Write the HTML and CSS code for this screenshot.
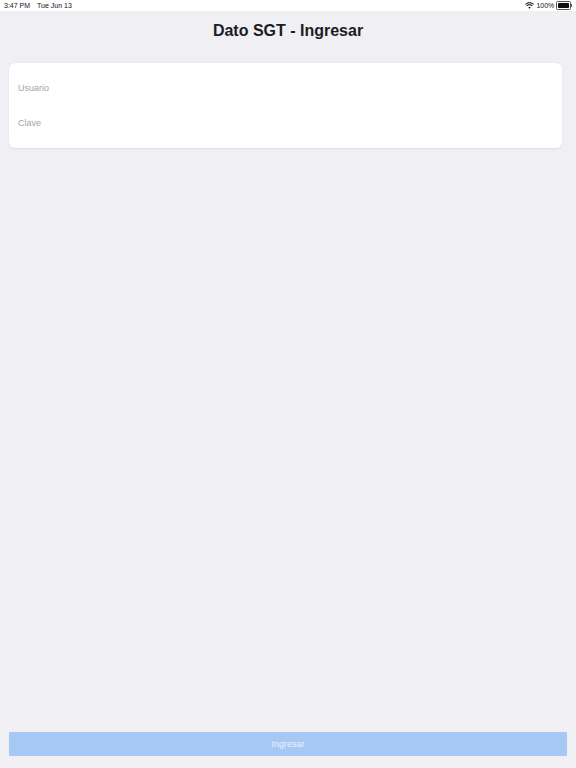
FILE: index.html
```html
<!DOCTYPE html>
<html lang="es">
<head>
<meta charset="utf-8">
<title>Dato SGT - Ingresar</title>
<link rel="stylesheet" href="styles.css">
</head>
<body>
<div class="screen">
  <div class="status-bar">
    <div class="status-left"><span class="time">3:47 PM</span><span class="date">Tue Jun 13</span></div>
    <div class="status-right">
      <svg class="wifi" width="9" height="7" viewBox="0 0 18 13" aria-hidden="true">
        <path d="M9 2.2c2.9 0 5.5 1.1 7.5 3l1.3-1.4C15.4 1.5 12.3.2 9 .2S2.6 1.5.2 3.8l1.3 1.4c2-1.9 4.6-3 7.5-3z" fill="#111"/>
        <path d="M9 6c1.9 0 3.6.7 4.9 1.9l1.3-1.4C13.6 5 11.4 4 9 4S4.4 5 2.8 6.5l1.3 1.4C5.4 6.7 7.1 6 9 6z" fill="#111"/>
        <path d="M9 9.6c.9 0 1.7.3 2.3.9L9 13l-2.3-2.5c.6-.6 1.4-.9 2.3-.9z" fill="#111"/>
      </svg>
      <span class="battery-pct">100%</span>
      <span class="battery"><span class="battery-fill"></span></span><span class="battery-tip"></span>
    </div>
  </div>
  <h1 class="title">Dato SGT - Ingresar</h1>
  <div class="card">
    <div class="field">Usuario</div>
    <div class="field">Clave</div>
  </div>
  <div class="spacer"></div>
  <button class="submit" type="button">Ingresar</button>
</div>
</body>
</html>
```
FILE: styles.css
```css
html, body {
  margin: 0;
  padding: 0;
}
body {
  background: #efeff4;
  font-family: "Liberation Sans", Arial, sans-serif;
}
.screen {
  display: flex;
  flex-direction: column;
  height: 768px;
}
.status-bar {
  height: 11px;
  background: #ffffff;
  display: flex;
  justify-content: space-between;
  align-items: center;
  padding: 0 4px;
  font-size: 7px;
  color: #111;
}
.status-left {
  display: flex;
  gap: 7px;
}
.status-right {
  display: flex;
  align-items: center;
}
.wifi {
  margin-right: 2px;
}
.battery-pct {
  margin-right: 2px;
}
.battery {
  width: 11px;
  height: 5px;
  border: 0.6px solid #555;
  border-radius: 1.5px;
  padding: 0.6px;
  display: flex;
}
.battery-fill {
  flex: 1;
  background: #111;
  border-radius: 0.8px;
}
.battery-tip {
  width: 1px;
  height: 2.5px;
  background: #666;
  margin-left: 0.5px;
}
.title {
  margin: 10px 0 0;
  height: 20px;
  line-height: 20px;
  text-align: center;
  font-size: 16px;
  font-weight: bold;
  color: #1c1c1e;
}
.card {
  margin: 22px 14px 0 9px;
  background: #ffffff;
  border-radius: 6px;
  box-shadow: 0 0.5px 2px rgba(0, 0, 0, 0.08);
  padding: 7.5px 9px;
}
.field {
  height: 35px;
  line-height: 35px;
  font-size: 9px;
  color: #a3a3a8;
}
.spacer {
  flex: 1;
}
.submit {
  margin: 0 9px 12px 9px;
  height: 24px;
  border: none;
  border-radius: 1px;
  background: #a6c8f5;
  color: #e9f1fc;
  font-family: "Liberation Sans", Arial, sans-serif;
  font-size: 9px;
  padding: 0;
}
```
